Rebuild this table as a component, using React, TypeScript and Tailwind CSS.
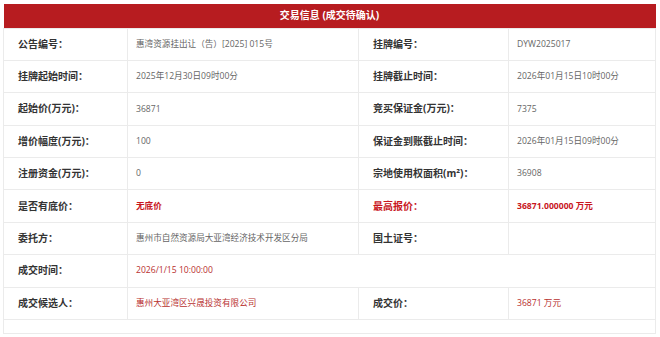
import React from 'react';

type Cell = { text: string; tone?: 'red' | 'redBold' | 'plain' };

const FONT = { fontFamily: '"Open Sans", "Noto Sans CJK SC", sans-serif' };

function Label({ text, red }: { text: string; red?: boolean }) {
  return (
    <td
      className={`border border-[#ebebeb] pl-[14px] text-[10px] font-bold ${
        red ? 'text-[#c8161d]' : 'text-[#333]'
      }`}
    >
      {text}
    </td>
  );
}

function Value({ cell, span }: { cell: Cell; span?: number }) {
  const tone =
    cell.tone === 'redBold'
      ? 'text-[#c8161d] font-bold'
      : cell.tone === 'red'
      ? 'text-[#b8312f]'
      : 'text-[#666]';
  return (
    <td colSpan={span} className={`border border-[#ebebeb] pl-[8px] text-[8.6px] ${tone}`}>
      {cell.text}
    </td>
  );
}

const rows: [string, Cell, string, Cell, boolean?][] = [
  ['公告编号：', { text: '惠湾资源挂出让（告）[2025] 015号' }, '挂牌编号：', { text: 'DYW2025017' }],
  ['挂牌起始时间：', { text: '2025年12月30日09时00分' }, '挂牌截止时间：', { text: '2026年01月15日10时00分' }],
  ['起始价(万元)：', { text: '36871' }, '竞买保证金(万元)：', { text: '7375' }],
  ['增价幅度(万元)：', { text: '100' }, '保证金到账截止时间：', { text: '2026年01月15日09时00分' }],
  ['注册资金(万元)：', { text: '0' }, '宗地使用权面积(m²)：', { text: '36908' }],
  ['是否有底价：', { text: '无底价', tone: 'redBold' }, '最高报价：', { text: '36871.000000 万元', tone: 'redBold' }, true],
  ['委托方：', { text: '惠州市自然资源局大亚湾经济技术开发区分局' }, '国土证号：', { text: '' }],
];

export default function App() {
  return (
    <div className="w-[660px] h-[337px] overflow-hidden bg-white pt-[4px] pl-[3px]" style={FONT}>
      <table className="w-[652px] table-fixed border-collapse">
        <colgroup>
          <col className="w-[124px]" />
          <col className="w-[231px]" />
          <col className="w-[150px]" />
          <col className="w-[147px]" />
        </colgroup>
        <thead>
          <tr className="h-[24px]">
            <th colSpan={4} className="bg-[#b71c20] text-center text-[10px] font-bold text-white">
              交易信息 (成交待确认)
            </th>
          </tr>
        </thead>
        <tbody>
          {rows.map(([l1, v1, l2, v2, redLabel]) => (
            <tr key={l1} className="h-[32.4px]">
              <Label text={l1} />
              <Value cell={v1} />
              <Label text={l2} red={redLabel} />
              <Value cell={v2} />
            </tr>
          ))}
          <tr className="h-[32.4px]">
            <Label text="成交时间：" />
            <Value cell={{ text: '2026/1/15 10:00:00', tone: 'red' }} span={3} />
          </tr>
          <tr className="h-[32.4px]">
            <Label text="成交候选人：" />
            <Value cell={{ text: '惠州大亚湾区兴晟投资有限公司', tone: 'red' }} />
            <Label text="成交价：" />
            <Value cell={{ text: '36871 万元', tone: 'red' }} />
          </tr>
          <tr className="h-[14px]">
            <td colSpan={4} className="border border-[#ebebeb]" />
          </tr>
        </tbody>
      </table>
    </div>
  );
}
